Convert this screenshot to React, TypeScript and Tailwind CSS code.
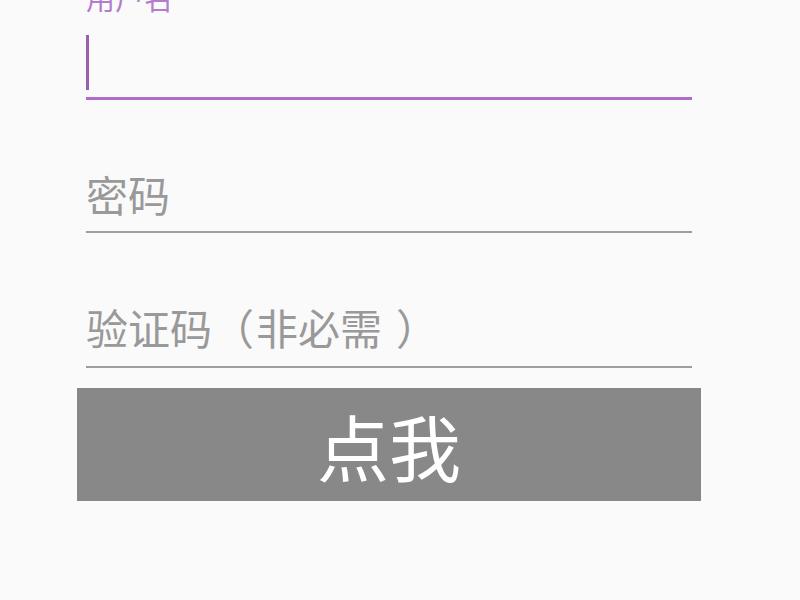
import React from "react";

const App = () => {
  return (
    <div
      className="w-[800px] h-[600px] bg-[#fafafa] overflow-hidden flex flex-col"
      style={{ fontFamily: '"Noto Sans CJK SC", "Noto Sans", sans-serif' }}
    >
      <div className="ml-[77px] w-[624px] flex flex-col">
        {/* 用户名 (focused) */}
        <div className="mx-[9px] flex flex-col">
          <div className="-mt-[17px] h-[28px] text-[29px] leading-[28px] text-[#b47ccc]">用户名</div>
          <div className="h-[86px]">
            <div className="mt-[24px] h-[55px] w-[3px] bg-[#9a5fb0]" />
          </div>
          <div className="h-[3px] bg-[#b06ccb]" />
        </div>

        {/* 密码 */}
        <div className="mx-[9px] mt-[73px] flex flex-col">
          <div className="h-[42px] text-[42px] leading-[42px] text-[#999999]">密码</div>
          <div className="mt-[16px] h-[2px] bg-[#9e9e9e]" />
        </div>

        {/* 验证码 */}
        <div className="mx-[9px] mt-[73px] flex flex-col">
          <div className="h-[42px] text-[42px] leading-[42px] text-[#999999] whitespace-nowrap">
            验证码<span className="mr-[2px]">（</span>非必需<span className="ml-[14px]">）</span>
          </div>
          <div className="mt-[18px] h-[2px] bg-[#9e9e9e]" />
        </div>

        <button className="mt-[20px] h-[113px] w-full bg-[#888888] text-white text-[72px] leading-[72px] flex items-center justify-center">
          点我
        </button>
      </div>
    </div>
  );
};

export default App;
